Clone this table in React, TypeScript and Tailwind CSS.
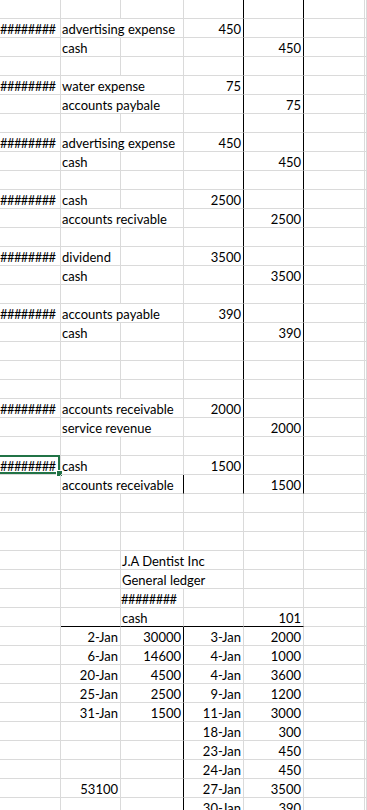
import React from "react";

type Cell = { c: number; s?: number; t?: string; r?: boolean; br?: boolean; bb?: boolean; sel?: boolean };

const H = "########";

function buildRow(items: Cell[], blackRight: number[], blackBottom: number[]): Cell[] {
  const out: Cell[] = [];
  let col = 0;
  const sorted = [...items].sort((a, b) => a.c - b.c);
  let idx = 0;
  while (col < 7) {
    const it = sorted[idx];
    if (it && it.c === col) {
      const s = it.s ?? 1;
      const last = col + s - 1;
      out.push({ ...it, s, br: it.br ?? blackRight.includes(last), bb: it.bb ?? blackBottom.includes(col) });
      col += s;
      idx++;
    } else {
      out.push({ c: col, s: 1, br: blackRight.includes(col), bb: blackBottom.includes(col) });
      col++;
    }
  }
  return out;
}

const top: Record<number, Cell[]> = {
  1: [{ c: 0, t: H }, { c: 1, s: 2, t: "advertising expense" }, { c: 3, t: "450", r: true }],
  2: [{ c: 1, t: "cash" }, { c: 4, t: "450", r: true }],
  4: [{ c: 0, t: H }, { c: 1, s: 2, t: "water expense" }, { c: 3, t: "75", r: true }],
  5: [{ c: 1, s: 2, t: "accounts paybale" }, { c: 4, t: "75", r: true }],
  7: [{ c: 0, t: H }, { c: 1, s: 2, t: "advertising expense" }, { c: 3, t: "450", r: true }],
  8: [{ c: 1, t: "cash" }, { c: 4, t: "450", r: true }],
  10: [{ c: 0, t: H }, { c: 1, t: "cash" }, { c: 3, t: "2500", r: true }],
  11: [{ c: 1, s: 2, t: "accounts recivable" }, { c: 4, t: "2500", r: true }],
  13: [{ c: 0, t: H }, { c: 1, t: "dividend" }, { c: 3, t: "3500", r: true }],
  14: [{ c: 1, t: "cash" }, { c: 4, t: "3500", r: true }],
  16: [{ c: 0, t: H }, { c: 1, s: 2, t: "accounts payable" }, { c: 3, t: "390", r: true }],
  17: [{ c: 1, t: "cash" }, { c: 4, t: "390", r: true }],
  21: [{ c: 0, t: H }, { c: 1, s: 2, t: "accounts receivable" }, { c: 3, t: "2000", r: true }],
  22: [{ c: 1, s: 2, t: "service revenue" }, { c: 4, t: "2000", r: true }],
  24: [{ c: 0, t: H, sel: true }, { c: 1, t: "cash" }, { c: 3, t: "1500", r: true }],
  25: [{ c: 1, s: 2, t: "accounts receivable", br: true }, { c: 4, t: "1500", r: true }],
  29: [{ c: 2, s: 2, t: "J.A Dentist Inc" }],
  30: [{ c: 2, s: 2, t: "General ledger" }],
  31: [{ c: 2, t: H }],
  32: [{ c: 2, t: "cash" }, { c: 4, t: "101", r: true }],
  33: [{ c: 1, t: "2-Jan", r: true }, { c: 2, t: "30000", r: true }, { c: 3, t: "3-Jan", r: true }, { c: 4, t: "2000", r: true }],
  34: [{ c: 1, t: "6-Jan", r: true }, { c: 2, t: "14600", r: true }, { c: 3, t: "4-Jan", r: true }, { c: 4, t: "1000", r: true }],
  35: [{ c: 1, t: "20-Jan", r: true }, { c: 2, t: "4500", r: true }, { c: 3, t: "4-Jan", r: true }, { c: 4, t: "3600", r: true }],
  36: [{ c: 1, t: "25-Jan", r: true }, { c: 2, t: "2500", r: true }, { c: 3, t: "9-Jan", r: true }, { c: 4, t: "1200", r: true }],
  37: [{ c: 1, t: "31-Jan", r: true }, { c: 2, t: "1500", r: true }, { c: 3, t: "11-Jan", r: true }, { c: 4, t: "3000", r: true }],
  38: [{ c: 3, t: "18-Jan", r: true }, { c: 4, t: "300", r: true }],
  39: [{ c: 3, t: "23-Jan", r: true }, { c: 4, t: "450", r: true }],
  40: [{ c: 3, t: "24-Jan", r: true }, { c: 4, t: "450", r: true }],
  41: [{ c: 1, t: "53100", r: true }, { c: 3, t: "27-Jan", r: true }, { c: 4, t: "3500", r: true }],
  42: [{ c: 3, t: "30-Jan", r: true }, { c: 4, t: "390", r: true }],
};

function rowCells(i: number): Cell[] {
  const items = top[i] ?? [];
  let br: number[] = [];
  let bb: number[] = [];
  if (i <= 25) br = [3, 4];
  if (i >= 33) br = [2];
  if (i === 32) bb = [1, 2, 3, 4];
  return buildRow(items, br, bb);
}

function CellView({ cell }: { cell: Cell }) {
  const isHash = cell.t === H;
  const cls = [
    "relative h-[19px] border-b border-r leading-[20px] whitespace-nowrap overflow-visible",
    cell.br ? "border-r-black" : "border-r-[#dadada]",
    cell.bb ? "border-b-black" : "border-b-[#dadada]",
    cell.r ? "text-right pr-[2px]" : isHash ? "text-left pl-0 tracking-[-0.6px]" : "text-left pl-[1px]",
    cell.s === 2 ? "col-span-2" : "",
  ].join(" ");
  return (
    <div className={cls}>
      {cell.t ?? ""}
      {cell.sel && (
        <>
          <div className="absolute -top-px -left-[2px] right-0 bottom-0 border-2 border-[#217346] pointer-events-none" />
          <div className="absolute -right-[3px] -bottom-[3px] w-[7px] h-[7px] bg-white flex items-center justify-center">
            <div className="w-[5px] h-[5px] bg-[#217346]" />
          </div>
        </>
      )}
    </div>
  );
}

export default function App() {
  const rows = Array.from({ length: 44 }, (_, i) => i);
  return (
    <div className="w-[367px] h-[810px] overflow-hidden bg-white text-black font-['Lato',sans-serif] text-[13px]">
      <div className="grid grid-cols-[61px_60px_63px_60px_60px_61px_1fr]">
        {rows.map((i) => rowCells(i).map((cell, j) => <CellView key={`${i}-${j}`} cell={cell} />))}
      </div>
    </div>
  );
}
